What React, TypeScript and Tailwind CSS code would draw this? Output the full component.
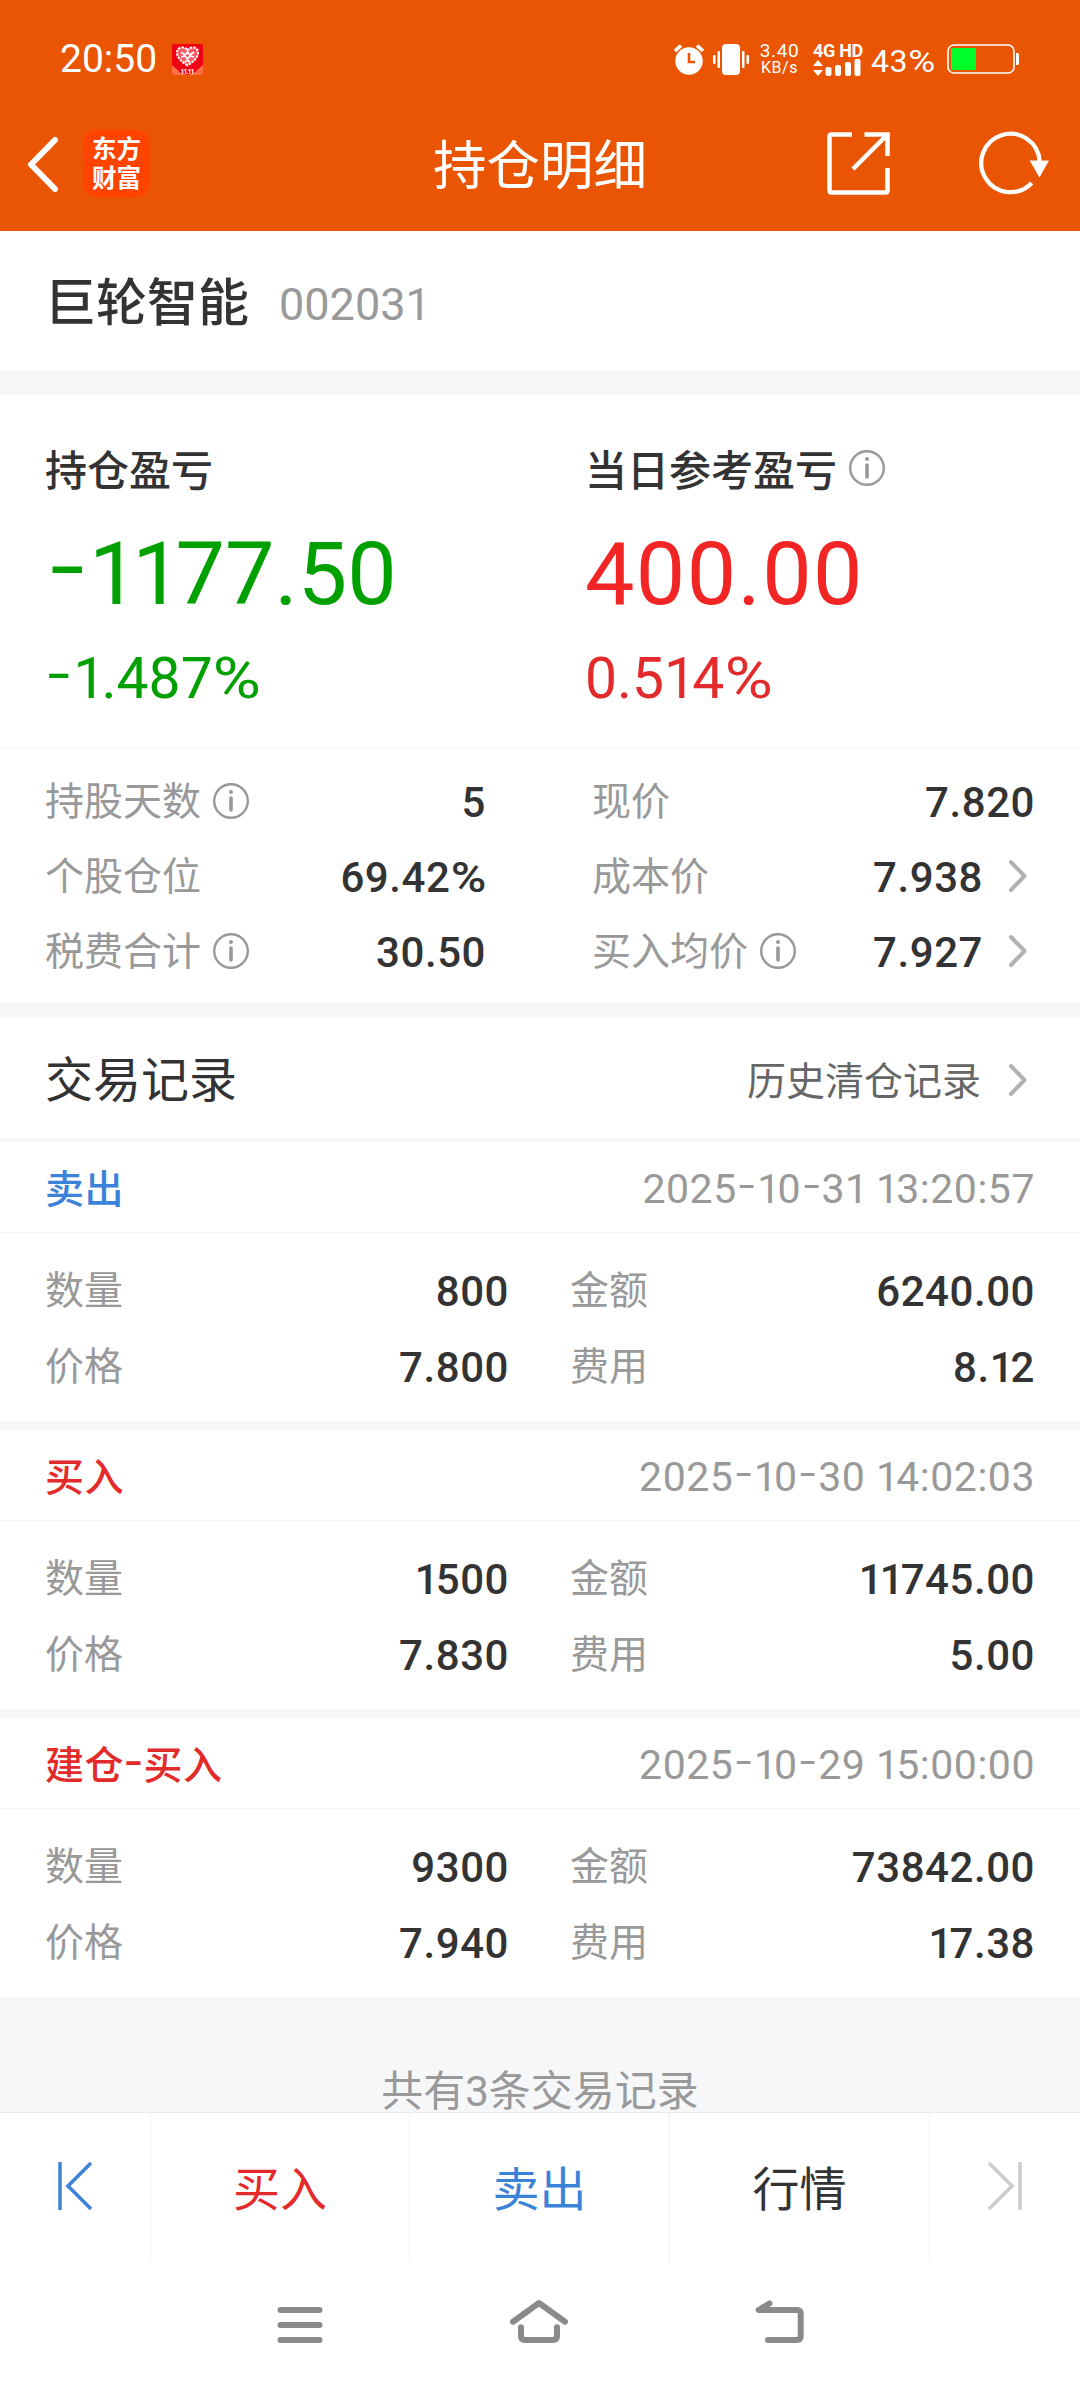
import { clsx } from 'clsx';
import type { ReactNode } from 'react';

interface Trade {
  type: string;
  side: 'buy' | 'sell';
  time: string;
  count: string;
  amount: string;
  price: string;
  fee: string;
}

const TRADES: Trade[] = [
  {
    type: '卖出',
    side: 'sell',
    time: '2025-10-31 13:20:57',
    count: '800',
    amount: '6240.00',
    price: '7.800',
    fee: '8.12',
  },
  {
    type: '买入',
    side: 'buy',
    time: '2025-10-30 14:02:03',
    count: '1500',
    amount: '11745.00',
    price: '7.830',
    fee: '5.00',
  },
  {
    type: '建仓-买入',
    side: 'buy',
    time: '2025-10-29 15:00:00',
    count: '9300',
    amount: '73842.00',
    price: '7.940',
    fee: '17.38',
  },
];

// proportional figures: narrow 1, wide hyphen and percent sign
const renderFigure = (part: string, key: number) => {
  if (part === '-') {
    return (
      <span key={key} className="inline-block w-[0.5em] text-center tracking-normal">
        <span className="inline-block -translate-y-[0.09em] scale-x-140">-</span>
      </span>
    );
  }
  if (part === '%') {
    return (
      <span key={key} className="inline-block w-[0.85em] text-center tracking-normal">
        <span className="inline-block scale-x-115">%</span>
      </span>
    );
  }
  if (part.startsWith('1')) {
    return (
      <span key={key} className="tracking-[-0.07em]">
        {part}
      </span>
    );
  }
  return part;
};

const Figures = ({ children, className }: { children: string; className?: string }) => (
  <span className={clsx('whitespace-pre', className ?? 'tracking-[0.013em]')}>
    {children.split(/(1+|[-%])/).map(renderFigure)}
  </span>
);

const InfoIcon = () => (
  <svg width="36" height="36" viewBox="0 0 36 36" fill="none" stroke="#999" className="shrink-0">
    <circle cx="18" cy="18" r="16.8" strokeWidth="2.4" />
    <circle cx="18" cy="9" r="2" fill="#999" stroke="none" />
    <path d="M18 15v12" strokeWidth="3.6" strokeLinecap="round" />
  </svg>
);

const ArrowIcon = () => (
  <svg width="20" height="34" viewBox="0 0 20 34" fill="none" className="shrink-0">
    <path
      d="M3 3l13.5 14L3 31"
      stroke="#b2b2b2"
      strokeWidth="4"
      strokeLinecap="round"
      strokeLinejoin="round"
    />
  </svg>
);

const StatusBar = () => (
  <div className="flex h-[96px] items-end justify-between pr-[61px] pl-[60px] text-white">
    <div className="flex h-[74px] items-center">
      <span className="w-[96px] text-[39px] leading-none whitespace-nowrap">20:50</span>
      <svg width="31" height="31" viewBox="0 0 31 31" className="ml-4">
        <rect width="31" height="31" rx="2" fill="#ef0012" />
        <path d="M0 21l8 7h15l8-7v8q0 2-2 2H2q-2 0-2-2z" fill="#ff7043" />
        <path d="M7 22h17v6l-8.5 3L7 28z" fill="#ef0012" />
        <path
          d="M15.5 21.5C10 18 5.5 14 5 9.5c-.3-4 2-6 5-6 2.5 0 4.5 1 5.5 3 1-2 3-3 5.5-3 3 0 5.3 2 5 6-.5 4.5-5 8.5-10.5 12z"
          fill="#ff5a64"
          stroke="#fff"
          strokeWidth="2"
          strokeDasharray="2.5 1"
        />
        <path
          d="M9 8l4 3 2.5-3 2.5 3 4-3M9 13l4-1 2.5 3 2.5-3 4 1M13 18l2.5-2 2.5 2"
          fill="none"
          stroke="#fff"
          strokeWidth="1.7"
        />
        <text x="15.5" y="29.5" textAnchor="middle" fontSize="7" fontWeight="700" textLength="14" fill="#fff">
          11.11
        </text>
      </svg>
    </div>
    <div className="flex h-[74px] items-center">
      <svg width="30" height="31" viewBox="0 0 30 31">
        <circle cx="15" cy="17" r="13.7" fill="#fff" />
        <path d="M1 7l6-5.5M29 7l-6-5.5" stroke="#fff" strokeWidth="3.6" />
        <path d="M15 9v9h6" fill="none" stroke="#ea5504" strokeWidth="2.6" />
      </svg>
      <svg width="36" height="31" viewBox="0 0 36 31" className="ml-[9px]" fill="#fff">
        <rect x="9" y="0" width="18" height="31" rx="4" />
        <rect x="0" y="11" width="2.5" height="9" rx="1" />
        <rect x="4.5" y="7" width="2.5" height="17" rx="1" />
        <rect x="29" y="7" width="2.5" height="17" rx="1" />
        <rect x="33.5" y="11" width="2.5" height="9" rx="1" />
      </svg>
      <div className="ml-[10px] flex w-[41px] flex-col items-center leading-[17px]">
        <span className="text-[19px] tracking-[0.6px]">3.40</span>
        <span className="text-[16px] tracking-[0.5px]">KB/s</span>
      </div>
      <div className="ml-[13px] w-[48px]">
        <div className="text-[18px] leading-[16px] font-bold tracking-[-0.3px] whitespace-nowrap">4G HD</div>
        <svg width="48" height="17" viewBox="0 0 48 17" fill="#fff">
          <path d="M5 1l5 6H0zM5 17l5-6H0z" />
          <rect x="12.5" y="8" width="6" height="9" rx="2" />
          <rect x="22" y="6" width="6" height="11" rx="2" />
          <rect x="32" y="3" width="6" height="14" rx="2" />
          <rect x="41.5" y="0" width="6" height="17" rx="2" />
        </svg>
      </div>
      <span className="mt-[3px] ml-[10px] w-[64px] text-[32px] leading-none">
        <Figures>43%</Figures>
      </span>
      <svg width="72" height="30" viewBox="0 0 72 30" className="ml-[12px]">
        <rect x="1" y="1" width="66" height="28" rx="6" fill="none" stroke="#fff" strokeWidth="1.6" />
        <rect x="4" y="4" width="25" height="22" fill="#00ff2a" />
        <path d="M69 9h1.5q1.5 0 1.5 2v8q0 2-1.5 2H69z" fill="#fff" />
      </svg>
    </div>
  </div>
);

const NavBar = () => (
  <div className="relative flex h-[135px] items-center">
    <svg width="34" height="58" viewBox="0 0 34 58" className="ml-[26px]">
      <path
        d="M29 5L5 29.5 29 54"
        fill="none"
        stroke="#fff"
        strokeWidth="6"
        strokeLinecap="round"
        strokeLinejoin="round"
      />
    </svg>
    <div className="ml-[23px] flex h-[67px] w-[67px] flex-col items-center justify-center rounded-[14px] bg-[#ff4400] text-[24.5px] leading-[29px] font-bold text-white">
      <span>东方</span>
      <span>财富</span>
    </div>
    <h1 className="absolute inset-x-0 pt-[8px] text-center text-[53.5px] text-white">持仓明细</h1>
    <svg
      width="64"
      height="64"
      viewBox="0 0 64 64"
      className="-mt-0.5 ml-auto"
      fill="none"
      stroke="#fff"
      strokeWidth="4.5"
    >
      <path d="M26 3.5H5.5q-2 0-2 2v54q0 2 2 2h54q2 0 2-2V37" />
      <path d="M38.5 3.5h23V25M61 4L27 38" />
    </svg>
    <svg width="72" height="64" viewBox="0 0 72 64" className="-mt-0.5 mr-[31px] ml-[87px]">
      <path d="M62.6 30A29.2 29.2 0 1 0 54.7 52" fill="none" stroke="#fff" strokeWidth="4.3" />
      <path d="M52.7 29.5H72L62.5 46.5z" fill="#fff" />
    </svg>
  </div>
);

interface StatProps {
  label: string;
  value: string;
  info?: boolean;
  arrow?: boolean;
}

const Stat = ({ label, value, info, arrow }: StatProps) => (
  <div className="flex h-[75px] items-center">
    <span className="text-[39px] text-[#999]">{label}</span>
    {info && (
      <span className="-mt-[3px] ml-3">
        <InfoIcon />
      </span>
    )}
    <span className="ml-auto text-[42px] font-medium text-[#333]">
      <Figures>{value}</Figures>
    </span>
    {arrow && (
      <span className="-mt-[3px] mr-[7px] ml-[25px]">
        <ArrowIcon />
      </span>
    )}
  </div>
);

const TradeCard = ({ trade }: { trade: Trade }) => (
  <section className="h-[279px] bg-white">
    <div className="flex h-[91px] items-center justify-between border-b border-[#f3f4f5] px-[45px] pt-[6px]">
      <span
        className={clsx(
          'text-[39px] font-medium',
          trade.side === 'buy' ? 'text-[#e32b2b]' : 'text-[#3b82d9]'
        )}
      >
        <Figures>{trade.type}</Figures>
      </span>
      <span className="text-[41px] text-[#999]">
        <Figures>{trade.time}</Figures>
      </span>
    </div>
    <div className="grid grid-cols-[464px_465px] justify-between gap-y-px px-[45px] pt-[21px]">
      <Stat label="数量" value={trade.count} />
      <Stat label="金额" value={trade.amount} />
      <Stat label="价格" value={trade.price} />
      <Stat label="费用" value={trade.fee} />
    </div>
  </section>
);

const Tab = ({ className, children }: { className?: string; children: ReactNode }) => (
  <button
    type="button"
    className={clsx('flex h-full items-center justify-center border-r border-[#eef0f2]', className)}
  >
    {children}
  </button>
);

const App = () => {
  return (
    <main className="flex h-[2388px] w-[1080px] flex-col overflow-hidden bg-[#f6f7f9] font-[Roboto,'Noto_Sans_CJK_SC',sans-serif]">
      <header className="h-[231px] bg-[#ea5504]">
        <StatusBar />
        <NavBar />
      </header>

      <section className="flex h-[140px] items-center bg-white px-[45px] pt-[7px]">
        <span className="text-[51px] font-medium text-[#333]">巨轮智能</span>
        <span className="ml-[30px] text-[45px] text-[#999]">
          <Figures className="tracking-normal">002031</Figures>
        </span>
      </section>

      <section className="mt-[24px] grid h-[352px] grid-cols-2 bg-white">
        <div className="pl-[45px] text-[#00a000]">
          <div className="mt-[42px] flex h-[68px] items-center text-[42px] font-medium text-[#333]">
            持仓盈亏
          </div>
          <div className="mt-[17px] text-[88px] leading-[104px]">
            <Figures className="tracking-normal">-1177.50</Figures>
          </div>
          <div className="mt-[20px] text-[57px] leading-[66px]">
            <Figures className="tracking-normal">-1.487%</Figures>
          </div>
        </div>
        <div className="pl-[45px] text-[#f22525]">
          <div className="mt-[42px] flex h-[68px] items-center text-[42px] font-medium text-[#333]">
            当日参考盈亏
            <span className="-mt-[6px] ml-3">
              <InfoIcon />
            </span>
          </div>
          <div className="mt-[17px] text-[88px] leading-[104px]">
            <Figures className="tracking-[0.016em]">400.00</Figures>
          </div>
          <div className="mt-[20px] text-[57px] leading-[66px] text-[#e32b2b]">
            <Figures className="tracking-normal">0.514%</Figures>
          </div>
        </div>
      </section>

      <section className="grid h-[256px] grid-cols-[441px_443px] content-start justify-between border-t border-[#f3f4f5] bg-white px-[45px] pt-[17px]">
        <Stat label="持股天数" value="5" info />
        <Stat label="现价" value="7.820" />
        <Stat label="个股仓位" value="69.42%" />
        <Stat label="成本价" value="7.938" arrow />
        <Stat label="税费合计" value="30.50" info />
        <Stat label="买入均价" value="7.927" info arrow />
      </section>

      <section className="mt-[15px] flex h-[120px] items-center bg-white pt-[6px] pr-[52px] pl-[45px]">
        <h2 className="text-[48px] text-[#333]">交易记录</h2>
        <span className="mt-0.5 mr-[27px] ml-auto text-[39px] text-[#666]">历史清仓记录</span>
        <span className="-mt-0.5">
          <ArrowIcon />
        </span>
      </section>

      <div className="mt-[4px] flex flex-col gap-[9px]">
        {TRADES.map((trade) => (
          <TradeCard key={trade.time} trade={trade} />
        ))}
      </div>

      <div className="flex h-[115px] items-end justify-center text-[42px] leading-[41px] text-[#999]">
        共有3条交易记录
      </div>

      <nav className="grid h-[150px] grid-cols-[151px_259px_260px_260px_150px] border-t border-[#e8eaed] bg-white text-[47px]">
        <Tab className="pb-[3px]">
          <svg width="36" height="50" viewBox="0 0 36 50" fill="none" stroke="#3b82d9" strokeWidth="3.5">
            <path d="M3 1v48M34 2L11 25l23 23" />
          </svg>
        </Tab>
        <Tab className="pt-[6px] text-[#e32b2b]">买入</Tab>
        <Tab className="pt-[6px] text-[#3b82d9]">卖出</Tab>
        <Tab className="pt-[6px] text-[#333]">行情</Tab>
        <Tab className="border-r-0 pb-[3px]">
          <svg width="36" height="50" viewBox="0 0 36 50" fill="none" stroke="#ccc" strokeWidth="3.5">
            <path d="M33 1v48M2 2l23 23L2 48" />
          </svg>
        </Tab>
      </nav>

      <footer className="flex flex-1 items-start justify-between bg-white px-[276px] pt-[37px] text-[#8a8a8a]">
        <svg width="48" height="48" viewBox="0 0 48 48" fill="none" stroke="currentColor" strokeWidth="6" strokeLinecap="round">
          <path d="M4.5 11h39M4.5 26h39M4.5 41h39" />
        </svg>
        <svg
          width="62"
          height="48"
          viewBox="0 0 62 48"
          fill="none"
          stroke="currentColor"
          strokeWidth="6"
          strokeLinecap="round"
          strokeLinejoin="round"
        >
          <path d="M5 22.7L31 4l26 18.7M13 28.3V37q0 4 4 4h28q4 0 4-4v-8.7" />
        </svg>
        <svg
          width="50"
          height="48"
          viewBox="0 0 50 48"
          fill="none"
          stroke="currentColor"
          strokeWidth="6"
          strokeLinecap="round"
          strokeLinejoin="round"
        >
          <path d="M15.5 4.5L4.6 11H43q3.7 0 3.7 3.7V37q0 4-3.7 4H14" />
        </svg>
      </footer>
    </main>
  );
};

export default App;
